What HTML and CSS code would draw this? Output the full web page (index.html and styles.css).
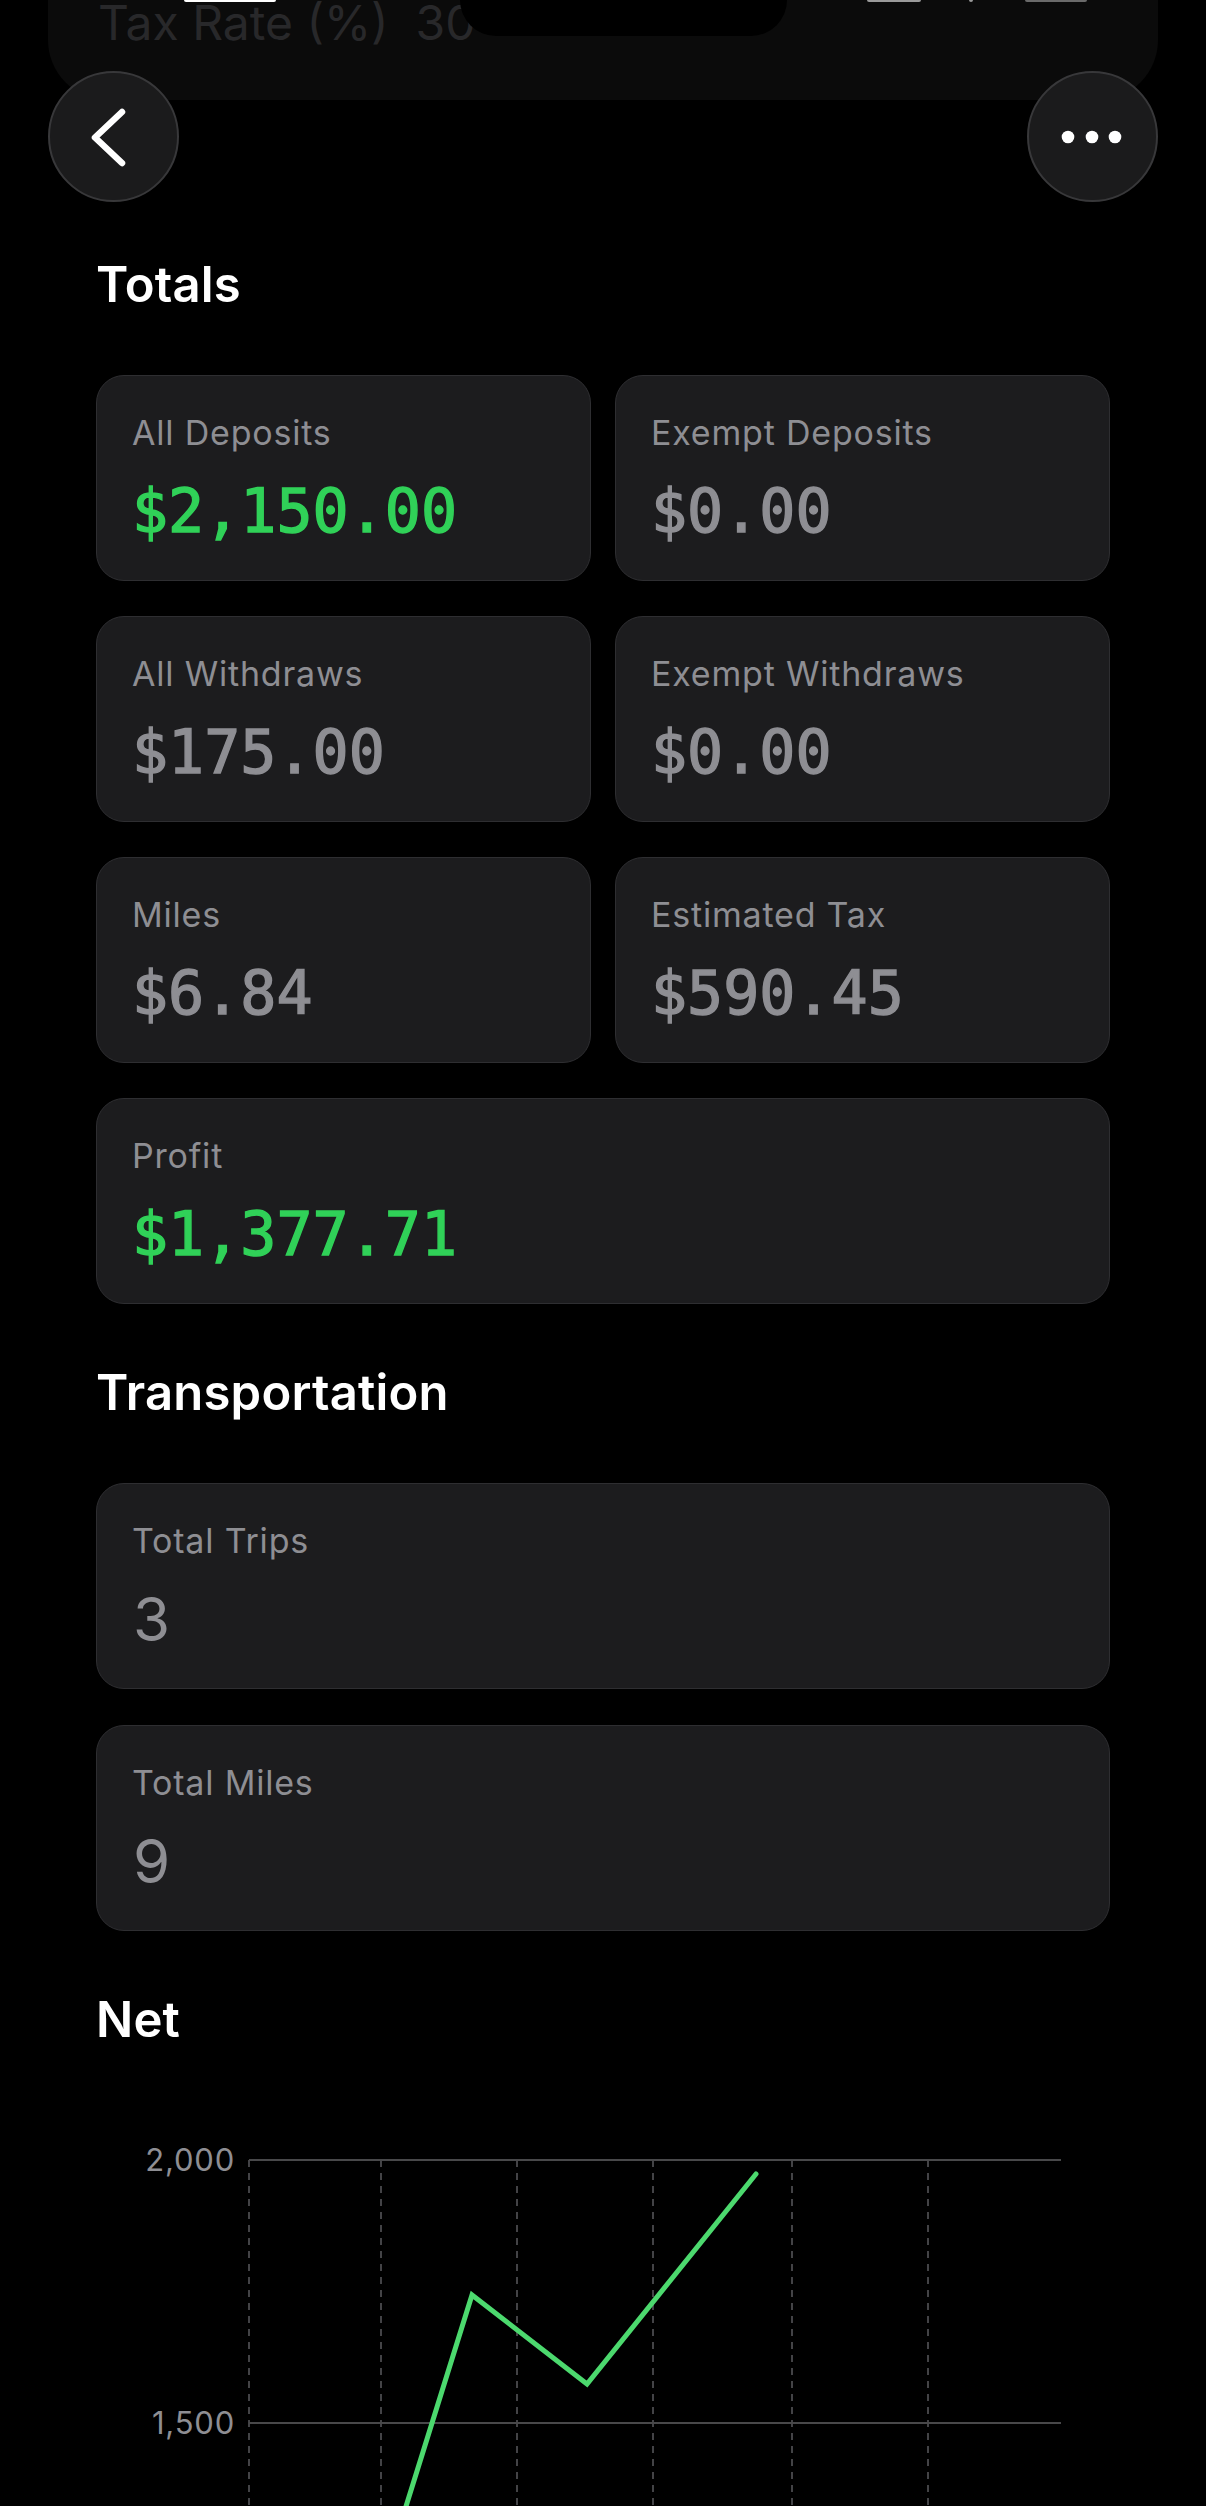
FILE: index.html
```html
<!DOCTYPE html>
<html lang="en">
<head>
<meta charset="utf-8">
<title>Totals</title>
<link rel="stylesheet" href="styles.css">
</head>
<body>
<div class="screen">
  <div class="backdrop-sheet">
    <span class="sheet-text">Tax Rate (%)&nbsp;&nbsp;30</span>
  </div>
  <div class="island"></div>
  <div class="status">
    <span class="status-time"></span>
    <span class="status-signal"></span>
    <span class="status-wifi"></span>
    <span class="status-battery"></span>
  </div>

  <header class="nav">
    <button class="round-btn" aria-label="Back">
      <svg width="131" height="131" viewBox="0 0 131 131"><polyline points="74,41 47,66.5 74,92" fill="none" stroke="#fff" stroke-width="6.5" stroke-linecap="round" stroke-linejoin="round"/></svg>
    </button>
    <button class="round-btn" aria-label="More">
      <svg width="131" height="131" viewBox="0 0 131 131"><circle cx="41" cy="66" r="6.3" fill="#fff"/><circle cx="65" cy="66" r="6.3" fill="#fff"/><circle cx="88" cy="66" r="6.3" fill="#fff"/></svg>
    </button>
  </header>

  <main class="content">
    <section class="section">
      <h2 class="section-title">Totals</h2>
      <div class="grid">
        <div class="card"><div class="label">All Deposits</div><div class="value mono green">$2,150.00</div></div>
        <div class="card"><div class="label">Exempt Deposits</div><div class="value mono">$0.00</div></div>
        <div class="card"><div class="label">All Withdraws</div><div class="value mono">$175.00</div></div>
        <div class="card"><div class="label">Exempt Withdraws</div><div class="value mono">$0.00</div></div>
        <div class="card"><div class="label">Miles</div><div class="value mono">$6.84</div></div>
        <div class="card"><div class="label">Estimated Tax</div><div class="value mono">$590.45</div></div>
        <div class="card wide"><div class="label">Profit</div><div class="value mono green">$1,377.71</div></div>
      </div>
    </section>

    <section class="section">
      <h2 class="section-title">Transportation</h2>
      <div class="stack">
        <div class="card"><div class="label">Total Trips</div><div class="value plain">3</div></div>
        <div class="card"><div class="label">Total Miles</div><div class="value plain">9</div></div>
      </div>
    </section>

    <section class="section">
      <h2 class="section-title">Net</h2>
      <svg class="chart" width="1014" height="470" viewBox="0 0 1014 470">
        <g stroke="#5a5a5e" stroke-width="1.5" stroke-dasharray="7 6">
          <line x1="153" y1="50" x2="153" y2="470"/>
          <line x1="285" y1="50" x2="285" y2="470"/>
          <line x1="421" y1="50" x2="421" y2="470"/>
          <line x1="557" y1="50" x2="557" y2="470"/>
          <line x1="696" y1="50" x2="696" y2="470"/>
          <line x1="832" y1="50" x2="832" y2="470"/>
        </g>
        <g stroke="#48484a" stroke-width="2">
          <line x1="153" y1="50" x2="965" y2="50"/>
          <line x1="153" y1="313" x2="965" y2="313"/>
        </g>
        <g class="axis-label" fill="#8e8e93" text-anchor="end">
          <text x="139" y="61">2,000</text>
          <text x="139" y="324">1,500</text>
        </g>
        <polyline points="287,470 376,185 491,274 660,64" fill="none" stroke="#4cd96e" stroke-width="5" stroke-linecap="round" stroke-linejoin="miter"/>
      </svg>
    </section>
  </main>
</div>
</body>
</html>
```

FILE: styles.css
```css
* { box-sizing: border-box; }

html, body {
  margin: 0;
  padding: 0;
  background: #000;
}

body {
  width: 1206px;
  height: 2506px;
  overflow: hidden;
  font-family: "Inter", "Noto Sans", "Liberation Sans", sans-serif;
  color: #fff;
}

.screen {
  position: relative;
  width: 1206px;
  height: 2506px;
  overflow: hidden;
}

/* dimmed sheet peeking behind the top */
.backdrop-sheet {
  position: absolute;
  left: 48px;
  top: -200px;
  width: 1110px;
  height: 300px;
  background: #0b0b0b;
  border-radius: 60px;
  z-index: 0;
}

.sheet-text {
  position: absolute;
  left: 50px;
  top: 195px;
  font-size: 48px;
  line-height: 56px;
  color: #28282a;
  white-space: nowrap;
}

.island {
  position: absolute;
  left: 460px;
  top: -60px;
  width: 327px;
  height: 96px;
  background: #000;
  border-radius: 36px;
  z-index: 1;
}

.status {
  position: absolute;
  left: 0;
  top: 0;
  width: 1206px;
  height: 3px;
  z-index: 2;
}

.status span {
  position: absolute;
  top: 0;
  height: 2px;
  border-radius: 0 0 2px 2px;
}

.status-time { left: 184px; width: 92px; background: #fff; height: 2px; }
.status-signal { left: 867px; width: 54px; background: #9a9a9a; }
.status-wifi { left: 969px; width: 4px; background: #9a9a9a; }
.status-battery { left: 1025px; width: 62px; background: #6a6a6a; height: 3px; }

.nav {
  position: relative;
  z-index: 3;
  display: flex;
  justify-content: space-between;
  padding: 71px 48px 0 48px;
}

.round-btn {
  width: 131px;
  height: 131px;
  padding: 0;
  margin: 0;
  border-radius: 50%;
  background: #1b1b1c;
  border: 2px solid #38383a;
  display: flex;
  align-items: center;
  justify-content: center;
  overflow: hidden;
}

.round-btn svg {
  display: block;
  flex: none;
  margin: -2px;
}

.content {
  position: relative;
  z-index: 3;
  padding: 54px 96px 0 96px;
}

.section + .section {
  margin-top: 60px;
}

.section-title {
  margin: 0 0 61px 0;
  font-size: 49px;
  line-height: 58px;
  font-weight: 600;
  color: #fff;
  letter-spacing: 0.2px;
}

.grid {
  display: grid;
  grid-template-columns: 1fr 1fr;
  column-gap: 24px;
  row-gap: 35px;
}

.stack {
  display: flex;
  flex-direction: column;
  gap: 36px;
}

.card {
  background: #1c1c1e;
  border: 1px solid #2e2e31;
  border-radius: 28px;
  padding: 37px 35px 33px 35px;
  min-height: 206px;
}

.card.wide {
  grid-column: span 2;
}

.label {
  font-size: 34px;
  line-height: 40px;
  color: #8e8e93;
  letter-spacing: 0.8px;
  white-space: nowrap;
}

.value {
  margin-top: 22px;
  font-size: 60px;
  line-height: 72px;
  color: #8e8e93;
  white-space: nowrap;
}

.value.mono {
  font-family: "DejaVu Sans Mono", "Liberation Mono", monospace;
  font-weight: 400;
  -webkit-text-stroke: 1.4px currentColor;
}

.value.plain {
  font-family: "Inter", "Noto Sans", sans-serif;
  font-weight: 400;
  padding-left: 1px;
}

.green {
  color: #30d158;
}

.chart {
  display: block;
}

.axis-label {
  font-family: "Inter", "Noto Sans", sans-serif;
  font-size: 31px;
  letter-spacing: 0.8px;
}
```
